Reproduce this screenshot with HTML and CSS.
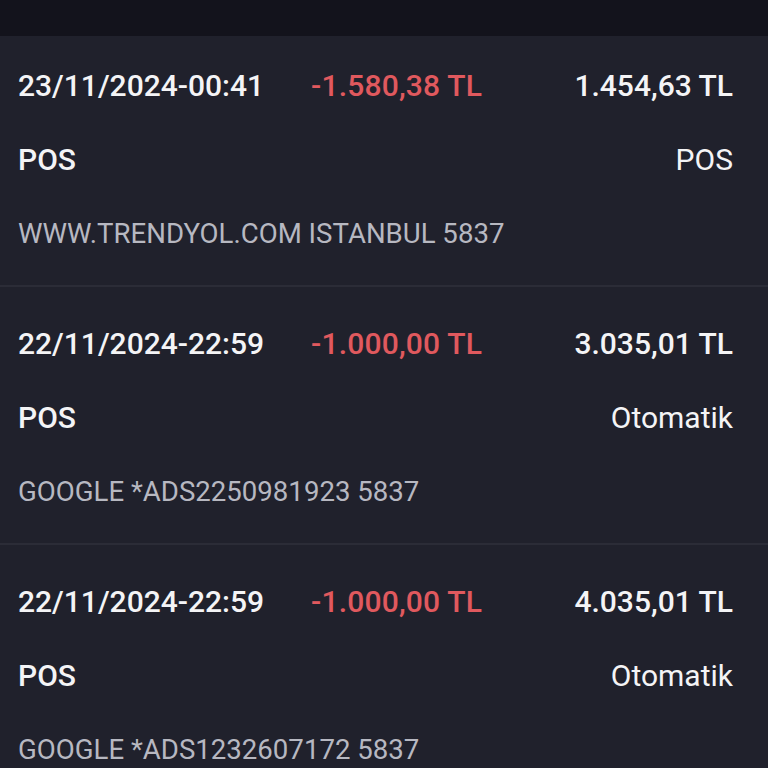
FILE: index.html
```html
<!DOCTYPE html>
<html lang="tr">
  <head>
    <meta charset="UTF-8" />
    <meta name="viewport" content="width=device-width, initial-scale=1.0" />
    <title>Hesap Hareketleri</title>
    <link rel="stylesheet" href="styles.css">
  </head>
  <body>
    <div class="topbar"></div>
    <div class="list-wrap">
      <div class="list">
        <div class="tx">
          <div class="line">
            <span class="date">23/11/2024-00:41</span>
            <span class="amount">-1.580,38 TL</span>
            <span class="balance">1.454,63 TL</span>
          </div>
          <div class="line">
            <span class="type">POS</span>
            <span class="channel">POS</span>
          </div>
          <div class="desc">WWW.TRENDYOL.COM ISTANBUL 5837</div>
        </div>
        <div class="tx">
          <div class="line">
            <span class="date">22/11/2024-22:59</span>
            <span class="amount">-1.000,00 TL</span>
            <span class="balance">3.035,01 TL</span>
          </div>
          <div class="line">
            <span class="type">POS</span>
            <span class="channel">Otomatik</span>
          </div>
          <div class="desc">GOOGLE *ADS2250981923 5837</div>
        </div>
        <div class="tx">
          <div class="line">
            <span class="date">22/11/2024-22:59</span>
            <span class="amount">-1.000,00 TL</span>
            <span class="balance">4.035,01 TL</span>
          </div>
          <div class="line">
            <span class="type">POS</span>
            <span class="channel">Otomatik</span>
          </div>
          <div class="desc">GOOGLE *ADS1232607172 5837</div>
        </div>
      </div>
    </div>
  </body>
</html>
```

FILE: styles.css
```css
* {
  margin: 0;
  padding: 0;
  box-sizing: border-box;
}
html,
body {
  height: 100%;
}
body {
  background-color: #20212c;
  font-family: Roboto, "Noto Sans", sans-serif;
  color: #f4f4f6;
  overflow: hidden;
}
.topbar {
  height: 36px;
  background-color: #13131c;
}
.list-wrap {
  overflow: hidden;
}
/* list is scrolled a bit, first row is cut at the top */
.list {
  margin-top: -7px;
}
.tx {
  height: 258px;
  padding: 20px 35px 0 18px;
  border-bottom: 2px solid #2b2c37;
}
.line {
  display: grid;
  grid-template-columns: 293px 1fr auto;
  font-size: 30px;
  line-height: 74px;
  white-space: nowrap;
}
.line .channel {
  grid-column: 3;
  text-align: right;
}
.date,
.balance,
.type {
  font-weight: 500;
}
.amount {
  color: #e0595e;
  font-weight: 500;
  letter-spacing: 0.2px;
}
.desc {
  font-size: 27.6px;
  line-height: 74px;
  color: #b7b8c1;
  white-space: nowrap;
}
```
